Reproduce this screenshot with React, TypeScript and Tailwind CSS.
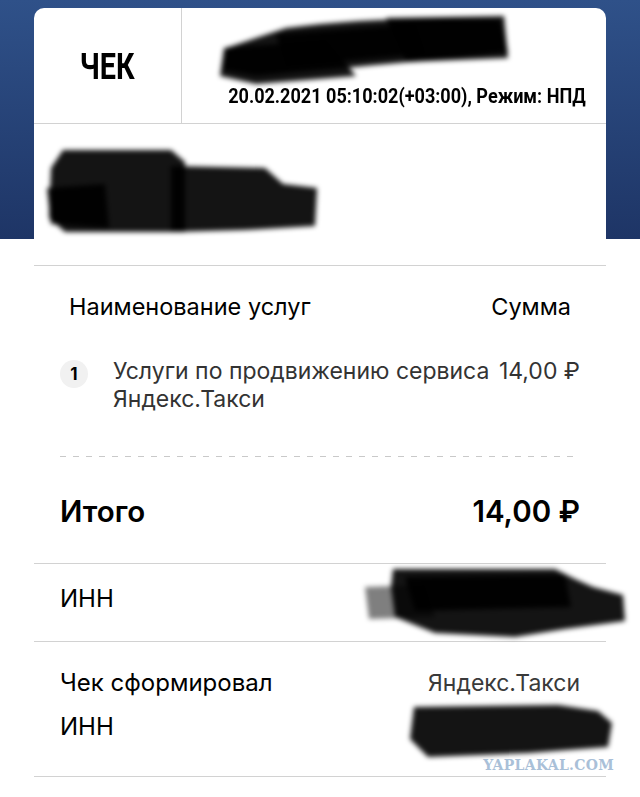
import React from 'react';

// Redaction scribble: a few black strokes blurred a little
const Scribble: React.FC<{ w: number; h: number; shapes: string[]; fade?: string[]; id: string }> = ({ w, h, shapes, fade = [], id }) => (
  <svg width={w} height={h} viewBox={`0 0 ${w} ${h}`} className="overflow-visible">
    <defs>
      <filter id={id} x="-20%" y="-40%" width="140%" height="180%">
        <feGaussianBlur stdDeviation="2.4" />
      </filter>
    </defs>
    <g filter={`url(#${id})`}>
      {fade.map((d, i) => (
        <path key={`f${i}`} d={d} fill="#000" opacity="0.5" />
      ))}
      {shapes.map((d, i) => (
        <path key={i} d={d} fill="#000" opacity="0.92" />
      ))}
    </g>
  </svg>
);

const body = "font-['Inter','Roboto','Liberation_Sans',sans-serif]";
const cond = "font-['Roboto','Liberation_Sans',sans-serif] font-bold";

export default function App() {
  return (
    <div className="relative min-h-[797px] w-full bg-[linear-gradient(to_bottom,#2f5189_0px,#1e3566_239px,#ffffff_239px)] pt-2">
      <div className="mx-[34px] rounded-t-[10px] bg-white">
        {/* Header */}
        <div className="flex h-[116px] border-b border-[#d2d2d2]">
          <div className="flex w-[148px] shrink-0 items-center justify-center border-r border-[#d2d2d2] pt-[3px]">
            <span className={`${cond} inline-block scale-x-[0.8] text-[36px] leading-none text-black`}>ЧЕК</span>
          </div>
          <div className="relative flex min-w-0 flex-1 flex-col items-end justify-end pb-[16px] pr-[20px]">
            <div className="absolute left-[34px] top-[6px]">
              <Scribble
                id="s1"
                w={294}
                h={72}
                shapes={[
                  'M70 14 C130 6 210 2 284 6 L292 38 C240 44 150 52 40 62 L6 56 L10 34 Z',
                  'M8 34 L110 26 L140 62 L40 70 L4 62 Z',
                  'M170 4 L288 2 L292 44 L190 48 Z',
                  'M60 20 L200 10 L210 40 L70 52 Z',
                ]}
              />
            </div>
            <span className={`${cond} inline-block origin-right scale-x-[0.86] whitespace-nowrap text-[21px] leading-none text-black`}>
              20.02.2021 05:10:02(+03:00), Режим: НПД
            </span>
          </div>
        </div>

        {/* Seller block */}
        <div className="h-[142px] border-b border-[#d2d2d2] pl-[11px] pt-[24px]">
          <Scribble
            id="s2"
            w={274}
            h={86}
            shapes={[
              'M18 2 L126 2 L140 14 L140 84 L20 84 L4 70 L6 20 Z',
              'M126 18 L220 20 L238 36 L272 40 L270 78 L200 82 L126 84 Z',
              'M2 40 L60 36 L64 80 L6 76 Z',
            ]}
          />
        </div>

        {/* Table header */}
        <div className={`${body} flex justify-between px-[35px] pt-[27px] text-[23.5px] leading-[28px] text-black`}>
          <span>Наименование услуг</span>
          <span>Сумма</span>
        </div>

        {/* Item */}
        <div className={`${body} flex items-start px-[26px] pt-[36px] text-[23px] leading-[28px] text-[#333333]`}>
          <div className="mr-[25px] mt-[3px] flex h-[28px] w-[28px] shrink-0 items-center justify-center rounded-full bg-[#f1f1f1] text-[17px] font-bold text-black">
            1
          </div>
          <div className="flex-1">
            <div className="whitespace-nowrap">Услуги по продвижению сервиса</div>
            <div>Яндекс.Такси</div>
          </div>
          <div className="whitespace-nowrap">14,00 ₽</div>
        </div>

        <div className="mx-[26px] mt-[43px] h-px bg-[repeating-linear-gradient(to_right,#c9c9c9_0px,#c9c9c9_6px,transparent_6px,transparent_13px)]" />

        {/* Total */}
        <div className={`${body} flex justify-between border-b border-[#d2d2d2] px-[26px] pb-[34px] pt-[36px] text-[29.5px] font-semibold leading-[36px] text-black`}>
          <span>Итого</span>
          <span>14,00 ₽</span>
        </div>

        {/* INN */}
        <div className={`${body} relative border-b border-[#d2d2d2] px-[26px] pb-[28px] pt-[21px] text-[24px] leading-[28px] text-black`}>
          <span>ИНН</span>
          <div className="absolute left-[331px] top-[3px]">
            <Scribble
              id="s3"
              w={260}
              h={72}
              fade={['M0 20 L60 18 L70 50 L4 52 Z']}
              shapes={[
                'M28 2 L190 2 L210 12 L228 20 L258 28 L260 54 L200 62 L150 70 L70 66 L30 50 L26 20 Z',
                'M40 10 L200 8 L206 40 L50 44 Z',
              ]}
            />
          </div>
        </div>

        {/* Issuer */}
        <div className={`${body} relative border-b border-[#d2d2d2] px-[26px] pb-[35px] pt-[27px] text-[24px] leading-[28px] text-black`}>
          <div className="flex justify-between">
            <span>Чек сформировал</span>
            <span className="text-[23px] text-[#3a3a3a]">Яндекс.Такси</span>
          </div>
          <div className="mt-[16px]">ИНН</div>
          <div className="absolute left-[374px] top-[61px]">
            <Scribble
              id="s4"
              w={204}
              h={54}
              shapes={['M6 4 L150 2 L190 8 L204 20 L200 44 L120 50 L20 54 L2 36 Z']}
            />
          </div>
          <span className="absolute bottom-[4px] right-[-8px] font-['DejaVu_Serif',serif] text-[14px] font-black leading-none tracking-[0.3px] text-[#a9c0d8]">
            YAPLAKAL.COM
          </span>
        </div>
      </div>
    </div>
  );
}
